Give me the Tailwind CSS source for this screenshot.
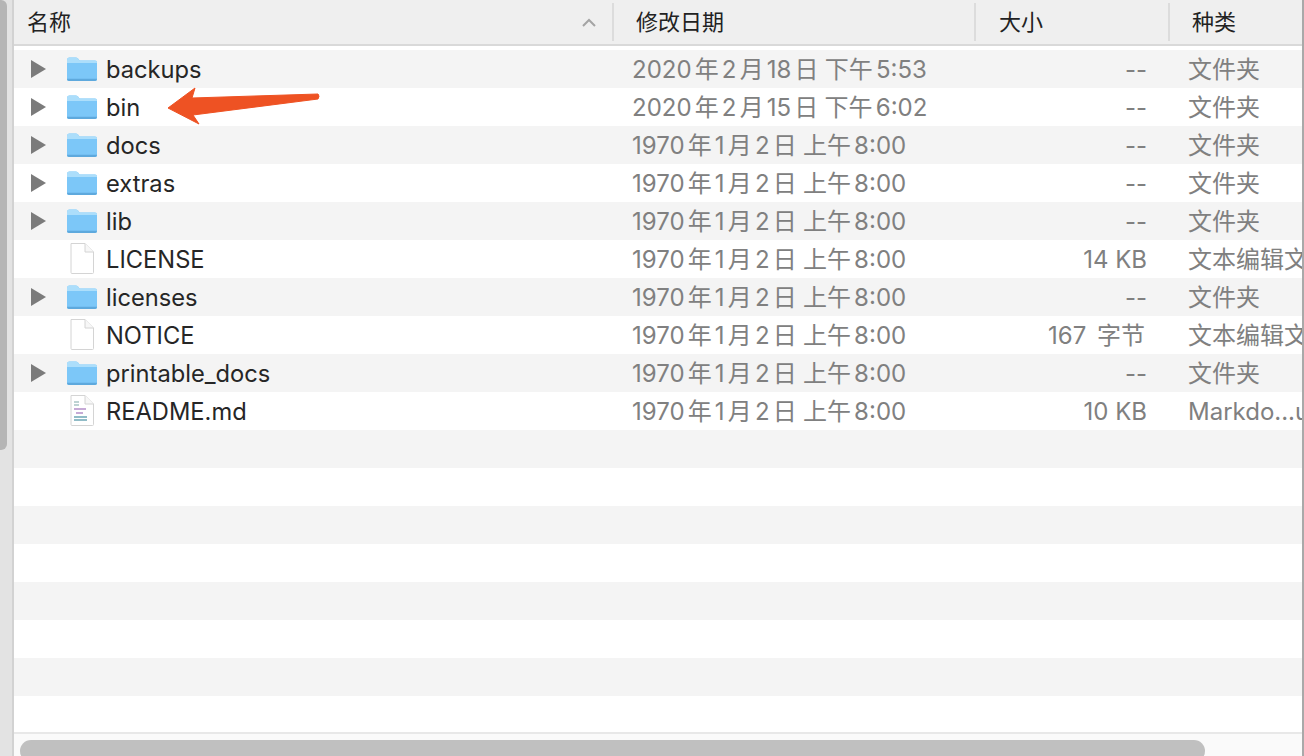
<!DOCTYPE html>
<html lang="zh-CN">
<head>
  <meta charset="UTF-8" />
  <title>Finder</title>
  <script src="https://cdn.jsdelivr.net/npm/@tailwindcss/browser@4"></script>
</head>
<body class="bg-white">
  <svg width="0" height="0" class="absolute">
    <defs>
      <g id="arrow"><path d="M0 0L15 9L0 18Z" fill="#7b7b7b"/></g>
      <g id="folder">
        <path d="M0 3Q0 0.500 2.500 0.500H9Q10.500 0.500 11.500 2L12.500 3.500H28Q30 3.500 30 5.500V22Q30 24 28 24H2Q0 24 0 22Z" fill="#7cc7f8"/>
        <path d="M0 6H30V5.200Q30 3.500 28 3.500H12.500L11.500 2Q10.500 0.500 9 0.500H2.500Q0 0.500 0 3Z" fill="#acdefb"/>
        <path d="M0 22Q0 24 2 24H28Q30 24 30 22V21.800H0Z" fill="#5ea9dd"/>
      </g>
      <g id="file">
        <path d="M1 0.500H15L23.500 9V29.500Q23.500 30.500 22.500 30.500H2Q1 30.500 1 29.500Z" fill="#fff" stroke="#d4d4d4"/>
        <path d="M15 0.500V9H23.500" fill="#f7f7f7" stroke="#d4d4d4"/>
      </g>
    </defs>
  </svg>

  <div class="relative flex h-[756px] w-[1304px] overflow-hidden font-['Inter','Noto_Sans_CJK_SC',sans-serif]">
    <!-- sidebar edge -->
    <div class="w-[14px] shrink-0 border-r-2 border-[#d2d2d2] bg-[#e3e3e3]">
      <div class="h-[450px] w-[7px] rounded-r-md bg-[#b5b5b5]"></div>
    </div>

    <div class="flex min-w-0 flex-1 flex-col border-r-2 border-[#a9a9a9]">
      <!-- header -->
      <div class="flex h-[46px] shrink-0 items-center border-b-2 border-[#d9d9d9] bg-[#efefef] text-[22px] text-[#222222]">
        <div class="relative flex h-[38px] w-[600px] items-center border-r-2 border-[#dcdcdc] pl-[13px]">
          名称
          <svg class="absolute left-[568px] top-[15px]" width="14" height="9" viewBox="0 0 14 9"><path d="M1 8L7 2L13 8" fill="none" stroke="#a4a4a4" stroke-width="2"/></svg>
        </div>
        <div class="flex h-[38px] w-[362px] items-center border-r-2 border-[#dcdcdc] pl-[22px]">修改日期</div>
        <div class="flex h-[38px] w-[194px] items-center border-r-2 border-[#dcdcdc] pl-[23px]">大小</div>
        <div class="pl-[22px]">种类</div>
      </div>

      <!-- file rows -->
      <div class="h-1 shrink-0"></div>
      <div class="flex flex-1 flex-col overflow-hidden text-[24px] text-[#808080] [word-spacing:-3.6px]">
        <div class="grid h-[38px] shrink-0 grid-cols-[618px_380px_135px_200px] items-center bg-[#f4f4f4]">
          <div class="flex items-center">
            <svg class="ml-[17px] mr-[21px] shrink-0" width="15" height="18" viewBox="0 0 15 18"><use href="#arrow"/></svg>
            <svg class="mr-[9px] shrink-0" width="30" height="24" viewBox="0 0 30 24"><use href="#folder"/></svg>
            <span class="pt-[2px] text-[23.7px] text-[#262626]">backups</span>
          </div>
          <span class="pt-[2px]">2020 年 2 月 18 日&nbsp; 下午 5:53</span>
          <span class="pt-[2px] text-right">--</span>
          <span class="whitespace-nowrap pl-[41px] pt-[2px]">文件夹</span>
        </div>
        <div class="grid h-[38px] shrink-0 grid-cols-[618px_380px_135px_200px] items-center bg-white">
          <div class="flex items-center">
            <svg class="ml-[17px] mr-[21px] shrink-0" width="15" height="18" viewBox="0 0 15 18"><use href="#arrow"/></svg>
            <svg class="mr-[9px] shrink-0" width="30" height="24" viewBox="0 0 30 24"><use href="#folder"/></svg>
            <span class="pt-[2px] text-[23.7px] text-[#262626]">bin</span>
          </div>
          <span class="pt-[2px]">2020 年 2 月 15 日&nbsp; 下午 6:02</span>
          <span class="pt-[2px] text-right">--</span>
          <span class="whitespace-nowrap pl-[41px] pt-[2px]">文件夹</span>
        </div>
        <div class="grid h-[38px] shrink-0 grid-cols-[618px_380px_135px_200px] items-center bg-[#f4f4f4]">
          <div class="flex items-center">
            <svg class="ml-[17px] mr-[21px] shrink-0" width="15" height="18" viewBox="0 0 15 18"><use href="#arrow"/></svg>
            <svg class="mr-[9px] shrink-0" width="30" height="24" viewBox="0 0 30 24"><use href="#folder"/></svg>
            <span class="pt-[2px] text-[23.7px] text-[#262626]">docs</span>
          </div>
          <span class="pt-[2px]">1970 年 1 月 2 日&nbsp; 上午 8:00</span>
          <span class="pt-[2px] text-right">--</span>
          <span class="whitespace-nowrap pl-[41px] pt-[2px]">文件夹</span>
        </div>
        <div class="grid h-[38px] shrink-0 grid-cols-[618px_380px_135px_200px] items-center bg-white">
          <div class="flex items-center">
            <svg class="ml-[17px] mr-[21px] shrink-0" width="15" height="18" viewBox="0 0 15 18"><use href="#arrow"/></svg>
            <svg class="mr-[9px] shrink-0" width="30" height="24" viewBox="0 0 30 24"><use href="#folder"/></svg>
            <span class="pt-[2px] text-[23.7px] text-[#262626]">extras</span>
          </div>
          <span class="pt-[2px]">1970 年 1 月 2 日&nbsp; 上午 8:00</span>
          <span class="pt-[2px] text-right">--</span>
          <span class="whitespace-nowrap pl-[41px] pt-[2px]">文件夹</span>
        </div>
        <div class="grid h-[38px] shrink-0 grid-cols-[618px_380px_135px_200px] items-center bg-[#f4f4f4]">
          <div class="flex items-center">
            <svg class="ml-[17px] mr-[21px] shrink-0" width="15" height="18" viewBox="0 0 15 18"><use href="#arrow"/></svg>
            <svg class="mr-[9px] shrink-0" width="30" height="24" viewBox="0 0 30 24"><use href="#folder"/></svg>
            <span class="pt-[2px] text-[23.7px] text-[#262626]">lib</span>
          </div>
          <span class="pt-[2px]">1970 年 1 月 2 日&nbsp; 上午 8:00</span>
          <span class="pt-[2px] text-right">--</span>
          <span class="whitespace-nowrap pl-[41px] pt-[2px]">文件夹</span>
        </div>
        <div class="grid h-[38px] shrink-0 grid-cols-[618px_380px_135px_200px] items-center bg-white">
          <div class="flex items-center">
            <svg class="ml-[56px] mr-[12px] shrink-0" width="24" height="31" viewBox="0 0 24 31"><use href="#file"/></svg>
            <span class="pt-[2px] text-[23.7px] text-[#262626]">LICENSE</span>
          </div>
          <span class="pt-[2px]">1970 年 1 月 2 日&nbsp; 上午 8:00</span>
          <span class="pt-[2px] text-right [word-spacing:0px]">14 KB</span>
          <span class="whitespace-nowrap pl-[41px] pt-[2px]">文本编辑文稿</span>
        </div>
        <div class="grid h-[38px] shrink-0 grid-cols-[618px_380px_135px_200px] items-center bg-[#f4f4f4]">
          <div class="flex items-center">
            <svg class="ml-[17px] mr-[21px] shrink-0" width="15" height="18" viewBox="0 0 15 18"><use href="#arrow"/></svg>
            <svg class="mr-[9px] shrink-0" width="30" height="24" viewBox="0 0 30 24"><use href="#folder"/></svg>
            <span class="pt-[2px] text-[23.7px] text-[#262626]">licenses</span>
          </div>
          <span class="pt-[2px]">1970 年 1 月 2 日&nbsp; 上午 8:00</span>
          <span class="pt-[2px] text-right">--</span>
          <span class="whitespace-nowrap pl-[41px] pt-[2px]">文件夹</span>
        </div>
        <div class="grid h-[38px] shrink-0 grid-cols-[618px_380px_135px_200px] items-center bg-white">
          <div class="flex items-center">
            <svg class="ml-[56px] mr-[12px] shrink-0" width="24" height="31" viewBox="0 0 24 31"><use href="#file"/></svg>
            <span class="pt-[2px] text-[23.7px] text-[#262626]">NOTICE</span>
          </div>
          <span class="pt-[2px]">1970 年 1 月 2 日&nbsp; 上午 8:00</span>
          <span class="pt-[2px] pr-[2px] text-right [word-spacing:4px]">167 字节</span>
          <span class="whitespace-nowrap pl-[41px] pt-[2px]">文本编辑文稿</span>
        </div>
        <div class="grid h-[38px] shrink-0 grid-cols-[618px_380px_135px_200px] items-center bg-[#f4f4f4]">
          <div class="flex items-center">
            <svg class="ml-[17px] mr-[21px] shrink-0" width="15" height="18" viewBox="0 0 15 18"><use href="#arrow"/></svg>
            <svg class="mr-[9px] shrink-0" width="30" height="24" viewBox="0 0 30 24"><use href="#folder"/></svg>
            <span class="pt-[2px] text-[23.7px] text-[#262626]">printable_docs</span>
          </div>
          <span class="pt-[2px]">1970 年 1 月 2 日&nbsp; 上午 8:00</span>
          <span class="pt-[2px] text-right">--</span>
          <span class="whitespace-nowrap pl-[41px] pt-[2px]">文件夹</span>
        </div>
        <div class="grid h-[38px] shrink-0 grid-cols-[618px_380px_135px_200px] items-center bg-white">
          <div class="flex items-center">
            <svg class="ml-[56px] mr-[12px] shrink-0" width="24" height="31" viewBox="0 0 24 31">
              <use href="#file"/>
              <path d="M4 7H9M4 10H9" stroke="#7fa8a8" stroke-width="1.200"/>
              <path d="M4 14H16M6 18H13" stroke="#b48fc9" stroke-width="1.400"/>
              <path d="M4 22H17M4 25H17" stroke="#6da6b5" stroke-width="1.400"/>
            </svg>
            <span class="pt-[2px] text-[23.7px] text-[#262626]">README.md</span>
          </div>
          <span class="pt-[2px]">1970 年 1 月 2 日&nbsp; 上午 8:00</span>
          <span class="pt-[2px] text-right [word-spacing:0px]">10 KB</span>
          <span class="whitespace-nowrap pl-[41px] pt-[2px]">Markdo...ument</span>
        </div>
        <div class="h-[38px] shrink-0 bg-[#f4f4f4]"></div>
        <div class="h-[38px] shrink-0 bg-white"></div>
        <div class="h-[38px] shrink-0 bg-[#f4f4f4]"></div>
        <div class="h-[38px] shrink-0 bg-white"></div>
        <div class="h-[38px] shrink-0 bg-[#f4f4f4]"></div>
        <div class="h-[38px] shrink-0 bg-white"></div>
        <div class="h-[38px] shrink-0 bg-[#f4f4f4]"></div>
        <div class="h-[36px] shrink-0 bg-white"></div>
      </div>

      <!-- horizontal scrollbar -->
      <div class="h-[24px] shrink-0 border-t-2 border-[#e8e8e8] bg-[#fafafa] pl-[6px] pt-[6px]">
        <div class="h-[22px] w-[1185px] rounded-full bg-[#c0c0c0]"></div>
      </div>
    </div>

    <!-- annotation arrow -->
    <svg class="absolute left-[160px] top-[84px]" width="165" height="44" viewBox="0 0 165 44">
      <path d="M8 24L35 4L32 14L158 10Q160 12 158 15L33 31L39 40Z" fill="#ee5223" stroke="#ee5223" stroke-linejoin="round"/>
    </svg>
  </div>
</body>
</html>
